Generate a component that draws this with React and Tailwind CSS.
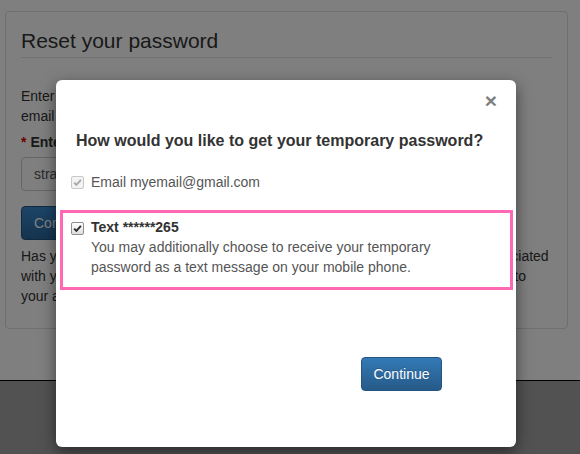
import React from "react";

const CheckBox = ({ disabled }) => (
  <span
    className={
      disabled
        ? "flex h-[13px] w-[13px] shrink-0 items-center justify-center rounded-[2px] border border-[#c9c9c9] bg-[#f3f3f3]"
        : "flex h-[13px] w-[13px] shrink-0 items-center justify-center rounded-[2px] border border-[#8e8e8e] bg-linear-to-b from-white to-[#dedede]"
    }
  >
    <svg viewBox="0 0 11 11" className="h-[11px] w-[11px]">
      <path
        d="M2.2 5.6 L4.4 7.9 L8.9 2.9"
        fill="none"
        stroke={disabled ? "#a9a9a9" : "#2b2b2b"}
        strokeWidth="1.9"
      />
    </svg>
  </span>
);

const App = () => {
  return (
    <div className="relative h-[454px] w-[580px] overflow-hidden bg-white font-['Liberation_Sans',Arial,sans-serif] text-[14px] leading-[20px] text-[#333]">
      {/* page behind the dialog */}
      <div className="h-[380px] pl-[5px] pr-[12px] pt-[11px]">
        <div className="h-[318px] rounded-[4px] border border-[#dedede] px-[15px]">
          <h3 className="mt-[17px] border-b border-[#e2e2e2] pb-[5px] text-[21px] leading-[23px] font-normal">
            Reset your password
          </h3>
          <p className="mt-[28px] whitespace-nowrap">
            Enter your username below. We will send a temporary password to the
            <br />
            email address or mobile phone on file for your account.
          </p>
          <label className="mt-[6px] block font-bold">
            <span className="mr-[4px] text-[#d00]">*</span>Enter your username
          </label>
          <div className="mt-[5px] flex h-[34px] w-[400px] items-center rounded-[4px] border border-[#ccc] px-[12px] text-[#555]">
            strawberry.fields
          </div>
          <button className="mt-[15px] h-[34px] rounded-[4px] border border-[#245580] bg-linear-to-b from-[#3b8ad0] to-[#2a679d] px-[12px] text-white">
            Continue
          </button>
          <p className="mt-[6px] whitespace-nowrap">
            Has your email address or phone number changed? If your email address associated
            <br />
            with your account is no longer valid, please call the Help Desk to regain access to
            <br />
            your account.
          </p>
        </div>
      </div>
      <footer className="h-[74px] border-t border-black bg-[#a5a5a5] pt-[70px] text-[15px] font-bold text-[#f0f0f0]">
        <div className="flex pl-[105px]">
          <span className="w-[265px]">Site Information</span>
          <span>Need Directions?</span>
        </div>
      </footer>

      {/* backdrop */}
      <div className="absolute inset-0 bg-black/50" />

      {/* dialog */}
      <div className="absolute left-[56px] top-[80px] flex h-[367px] w-[460px] flex-col rounded-[6px] bg-white shadow-[0_5px_15px_rgba(0,0,0,0.5)]">
        <div className="flex justify-end pr-[19px] pt-[10px]">
          <span className="text-[21px] leading-[21px] font-bold text-[#7f7f7f]">×</span>
        </div>
        <h4 className="mt-[20px] pl-[20px] text-[16px] leading-[20px] font-bold text-[#333]">
          How would you like to get your temporary password?
        </h4>
        <div className="mt-[21px] flex items-center gap-[7px] pl-[15px] text-[#555]">
          <CheckBox disabled />
          <span>Email myemail@gmail.com</span>
        </div>
        <div className="ml-[4px] mt-[18px] h-[80px] w-[453px] border-[3px] border-[#ff69b4] pl-[8px] pt-[4px]">
          <div className="flex items-start gap-[7px]">
            <div className="mt-[5px]">
              <CheckBox />
            </div>
            <div className="text-[#555]">
              <div className="font-bold text-[#333]">Text ******265</div>
              You may additionally choose to receive your temporary
              <br />
              password as a text message on your mobile phone.
            </div>
          </div>
        </div>
        <div className="mt-[67px] flex justify-end pr-[74px]">
          <button className="h-[34px] w-[81px] rounded-[4px] border border-[#245580] bg-linear-to-b from-[#337ab7] to-[#265a88] text-white [text-shadow:0_-1px_0_rgba(0,0,0,0.2)]">
            Continue
          </button>
        </div>
      </div>
    </div>
  );
};

export default App;
